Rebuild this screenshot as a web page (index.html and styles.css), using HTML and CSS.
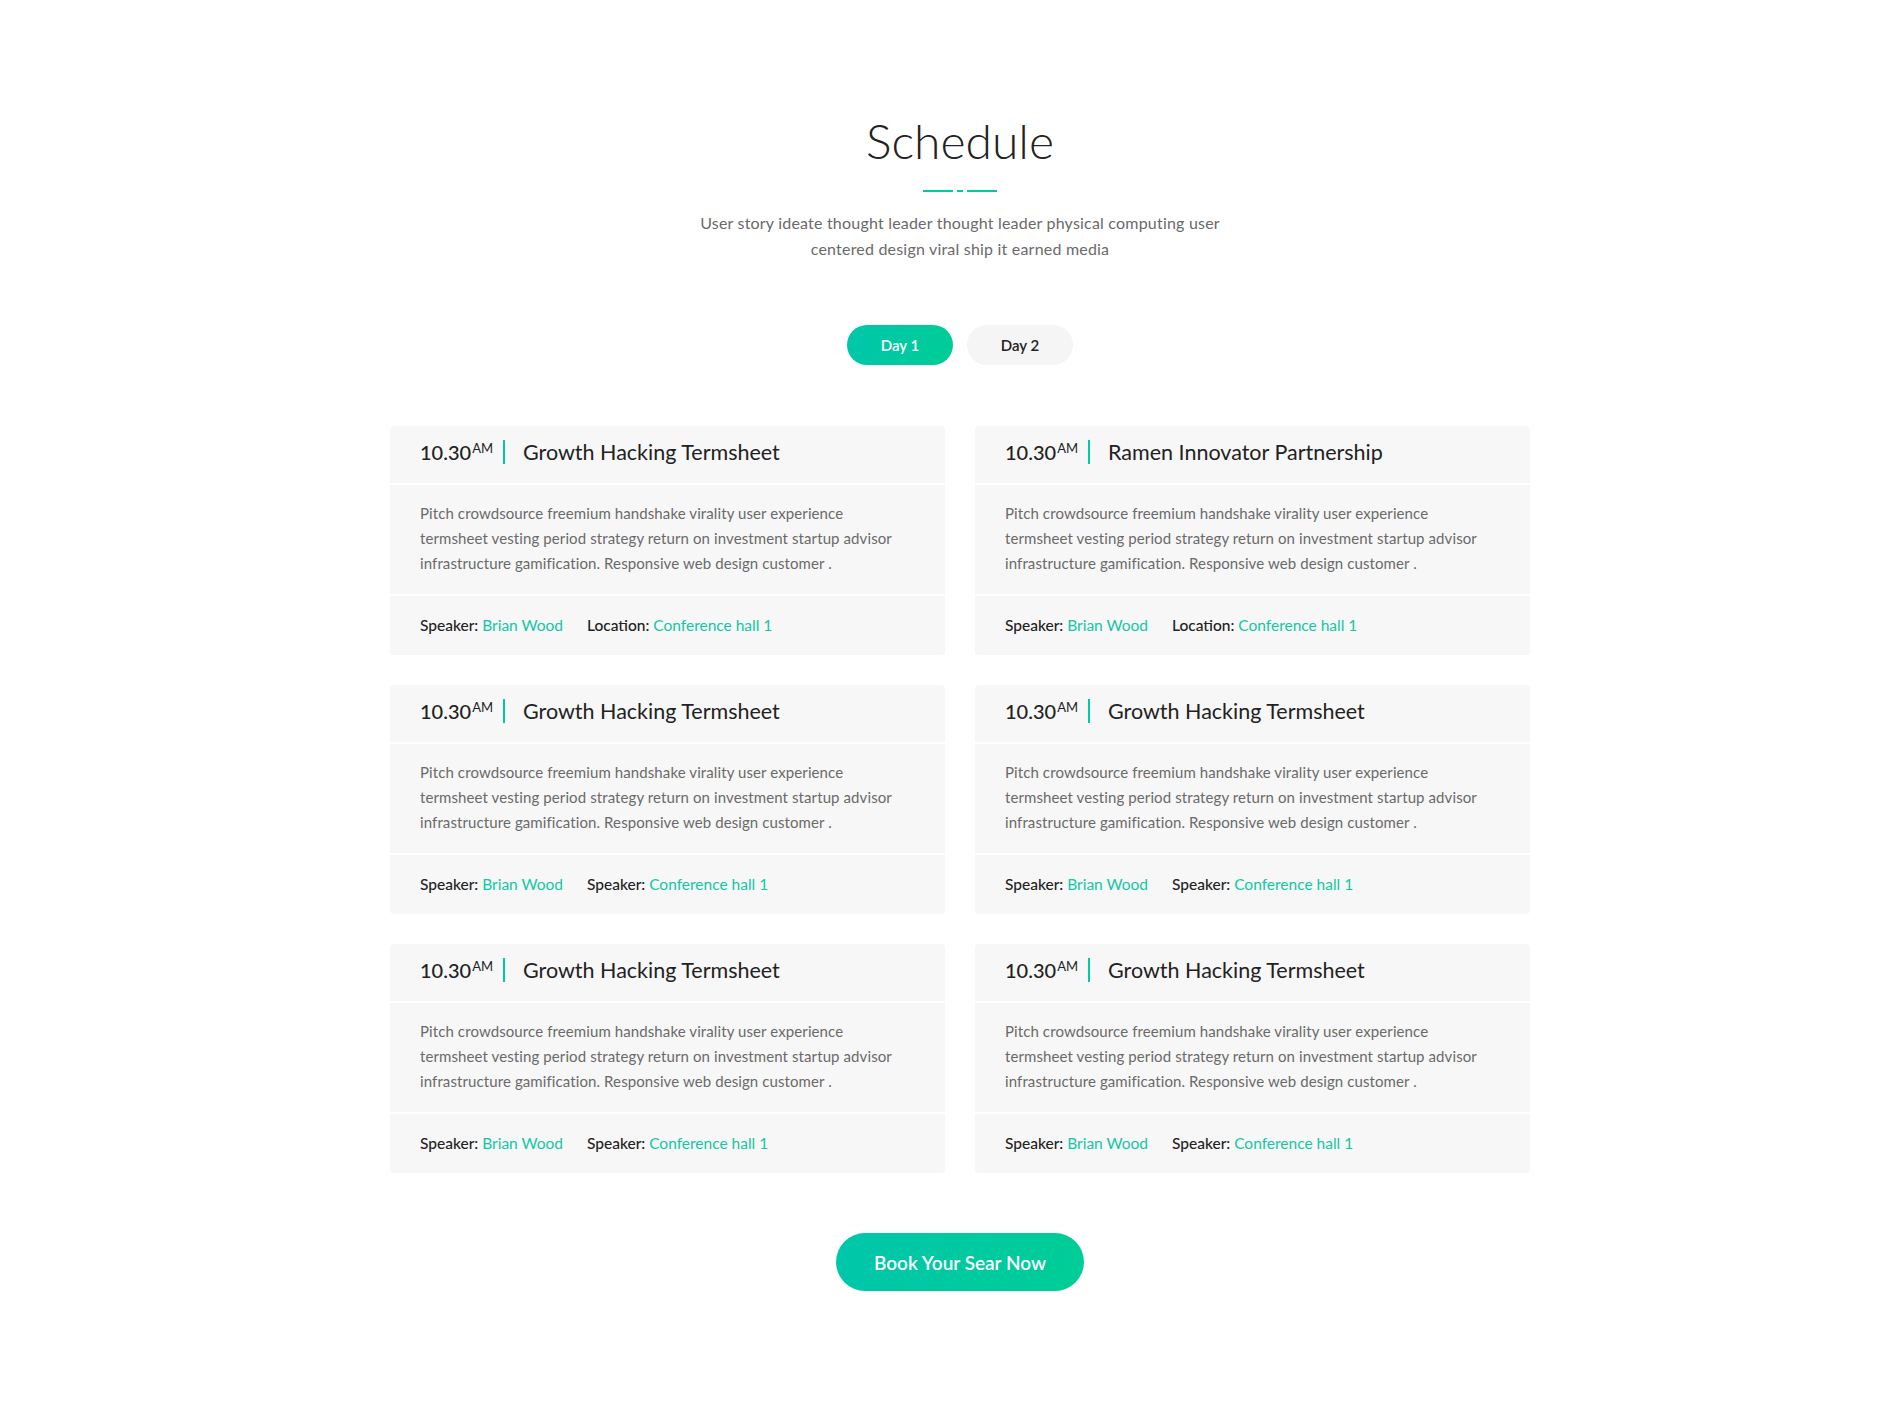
FILE: index.html
```html
<!DOCTYPE html>
<html lang="en">
<head>
<meta charset="utf-8">
<title>Schedule</title>
<link rel="stylesheet" href="styles.css">
</head>
<body>
<main class="page">
  <section class="schedule">
    <h2 class="title">Schedule</h2>
    <div class="divider"><span class="seg long"></span><span class="seg short"></span><span class="seg long"></span></div>
    <p class="subtitle">User story ideate thought leader thought leader physical computing user centered design viral ship it earned media</p>

    <div class="tabs">
      <button class="tab active">Day 1</button>
      <button class="tab">Day 2</button>
    </div>

    <div class="grid">
      <article class="card">
        <header class="card-head"><span class="time">10.30<sup>AM</sup></span><span class="bar"></span><span class="talk">Growth Hacking Termsheet</span></header>
        <div class="card-body"><p>Pitch crowdsource freemium handshake virality user experience termsheet vesting period strategy return on investment startup advisor infrastructure gamification. Responsive web design customer .</p></div>
        <footer class="card-foot"><span class="meta">Speaker: <a href="#">Brian Wood</a></span><span class="meta">Location: <a href="#">Conference hall 1</a></span></footer>
      </article>
      <article class="card">
        <header class="card-head"><span class="time">10.30<sup>AM</sup></span><span class="bar"></span><span class="talk">Ramen Innovator Partnership</span></header>
        <div class="card-body"><p>Pitch crowdsource freemium handshake virality user experience termsheet vesting period strategy return on investment startup advisor infrastructure gamification. Responsive web design customer .</p></div>
        <footer class="card-foot"><span class="meta">Speaker: <a href="#">Brian Wood</a></span><span class="meta">Location: <a href="#">Conference hall 1</a></span></footer>
      </article>
      <article class="card">
        <header class="card-head"><span class="time">10.30<sup>AM</sup></span><span class="bar"></span><span class="talk">Growth Hacking Termsheet</span></header>
        <div class="card-body"><p>Pitch crowdsource freemium handshake virality user experience termsheet vesting period strategy return on investment startup advisor infrastructure gamification. Responsive web design customer .</p></div>
        <footer class="card-foot"><span class="meta">Speaker: <a href="#">Brian Wood</a></span><span class="meta">Speaker: <a href="#">Conference hall 1</a></span></footer>
      </article>
      <article class="card">
        <header class="card-head"><span class="time">10.30<sup>AM</sup></span><span class="bar"></span><span class="talk">Growth Hacking Termsheet</span></header>
        <div class="card-body"><p>Pitch crowdsource freemium handshake virality user experience termsheet vesting period strategy return on investment startup advisor infrastructure gamification. Responsive web design customer .</p></div>
        <footer class="card-foot"><span class="meta">Speaker: <a href="#">Brian Wood</a></span><span class="meta">Speaker: <a href="#">Conference hall 1</a></span></footer>
      </article>
      <article class="card">
        <header class="card-head"><span class="time">10.30<sup>AM</sup></span><span class="bar"></span><span class="talk">Growth Hacking Termsheet</span></header>
        <div class="card-body"><p>Pitch crowdsource freemium handshake virality user experience termsheet vesting period strategy return on investment startup advisor infrastructure gamification. Responsive web design customer .</p></div>
        <footer class="card-foot"><span class="meta">Speaker: <a href="#">Brian Wood</a></span><span class="meta">Speaker: <a href="#">Conference hall 1</a></span></footer>
      </article>
      <article class="card">
        <header class="card-head"><span class="time">10.30<sup>AM</sup></span><span class="bar"></span><span class="talk">Growth Hacking Termsheet</span></header>
        <div class="card-body"><p>Pitch crowdsource freemium handshake virality user experience termsheet vesting period strategy return on investment startup advisor infrastructure gamification. Responsive web design customer .</p></div>
        <footer class="card-foot"><span class="meta">Speaker: <a href="#">Brian Wood</a></span><span class="meta">Speaker: <a href="#">Conference hall 1</a></span></footer>
      </article>
    </div>

    <div class="cta-wrap">
      <a class="cta" href="#">Book Your Sear Now</a>
    </div>
  </section>
</main>
</body>
</html>
```

FILE: styles.css
```css
* { box-sizing: border-box; }

html, body {
  margin: 0;
  padding: 0;
  background: #ffffff;
}

body {
  font-family: Lato, "Open Sans", "Liberation Sans", sans-serif;
  color: #222222;
}

.page {
  padding-left: 17px;
}

.schedule {
  display: flex;
  flex-direction: column;
  align-items: center;
  padding: 112px 0 127px;
}

.title {
  margin: 0;
  font-size: 48px;
  line-height: 58px;
  font-weight: 300;
  color: #222222;
}

.divider {
  display: flex;
  gap: 4px;
  margin-top: 20px;
  height: 2px;
}

.seg {
  display: block;
  height: 2px;
  background: #00c9a7;
}

.seg.long { width: 30px; }
.seg.short { width: 6px; }

.subtitle {
  margin: 18px 0 0;
  max-width: 560px;
  text-align: center;
  font-size: 16px;
  letter-spacing: 0.2px;
  line-height: 26px;
  color: #6a6a6a;
  font-weight: 400;
}

.tabs {
  display: flex;
  gap: 14px;
  margin-top: 63px;
}

.tab {
  width: 106px;
  height: 40px;
  border: none;
  border-radius: 20px;
  background: #f5f5f5;
  color: #222222;
  font-family: inherit;
  font-size: 15px;
  font-weight: 600;
  cursor: pointer;
}

.tab.active {
  background: linear-gradient(110deg, #00c6ab 0%, #00cd96 100%);
  color: #ffffff;
}

.grid {
  display: grid;
  grid-template-columns: 555px 555px;
  column-gap: 30px;
  row-gap: 30px;
  margin-top: 61px;
}

.card {
  display: flex;
  flex-direction: column;
  gap: 2px;
  border-radius: 4px;
  overflow: hidden;
}

.card-head,
.card-body,
.card-foot {
  background: #f7f7f7;
  padding: 0 30px;
}

.card-head {
  display: flex;
  align-items: center;
  height: 57px;
  padding-bottom: 6px;
}

.time {
  font-size: 20px;
  line-height: 24px;
  font-weight: 500;
  color: #222222;
}

.time sup {
  font-size: 13px;
  line-height: 0;
  vertical-align: 7px;
  font-weight: 400;
  margin-left: 1px;
}

.bar {
  display: block;
  width: 2px;
  height: 24px;
  background: #00c9a7;
  margin: 0 18px 0 10px;
}

.talk {
  font-size: 21.5px;
  line-height: 26px;
  font-weight: 400;
  color: #222222;
}

.card-body {
  padding-top: 16px;
  padding-bottom: 18px;
}

.card-body p {
  margin: 0;
  max-width: 484px;
  font-size: 15px;
  letter-spacing: 0.1px;
  line-height: 25px;
  color: #6a6a6a;
}

.card-foot {
  display: flex;
  gap: 24px;
  padding-top: 17px;
  padding-bottom: 17px;
}

.meta {
  font-size: 15.5px;
  line-height: 25px;
  font-weight: 500;
  color: #222222;
}

.meta a {
  color: #12c7a4;
  text-decoration: none;
  font-weight: 400;
}

.cta-wrap {
  margin-top: 60px;
}

.cta {
  display: flex;
  align-items: center;
  justify-content: center;
  width: 248px;
  height: 58px;
  border-radius: 29px;
  background: linear-gradient(110deg, #00c6ab 0%, #00cd96 100%);
  color: #ffffff;
  font-size: 19px;
  font-weight: 600;
  text-decoration: none;
}
```
